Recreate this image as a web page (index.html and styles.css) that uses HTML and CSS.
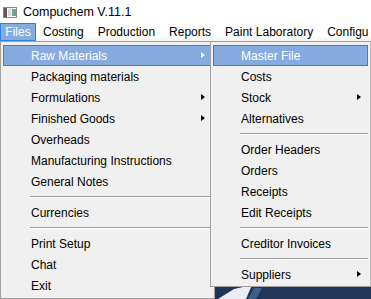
FILE: index.html
```html
<!DOCTYPE html>
<html lang="en">
<head>
    <meta charset="UTF-8">
    <title>Compuchem V.11.1</title>
    <link rel="stylesheet" href="styles.css">
</head>
<body>
    <div class="window">
        <div class="titlebar">
            <svg class="app-icon" width="14" height="11" viewBox="0 0 14 11">
                <rect x="0.5" y="0.5" width="13" height="10" fill="#fff" stroke="#8a8a8a"/>
                <rect x="1" y="1" width="3" height="9" fill="#5a5a5a"/>
                <rect x="9" y="2" width="4" height="7" fill="#6fa58a"/>
                <rect x="5" y="2" width="3" height="7" fill="#d8d8d8"/>
            </svg>
            <span class="title">Compuchem V.11.1</span>
        </div>

        <div class="menubar">
            <span class="top-item active">Files</span>
            <span class="top-item">Costing</span>
            <span class="top-item">Production</span>
            <span class="top-item">Reports</span>
            <span class="top-item">Paint Laboratory</span>
            <span class="top-item">Configu</span>
        </div>

        <div class="client">
            <svg class="backdrop" width="160" height="14" viewBox="0 0 160 14">
                <polygon points="6,14 22,4 40,0 34,14" fill="#e9eef4"/>
                <polygon points="36,14 42,3 50,3 44,14" fill="#3d5f8c"/>
            </svg>
        </div>

        <!-- Files dropdown -->
        <div class="menu main-menu">
            <div class="item selected">Raw Materials<i class="arrow"></i></div>
            <div class="item">Packaging materials</div>
            <div class="item">Formulations<i class="arrow"></i></div>
            <div class="item">Finished Goods<i class="arrow"></i></div>
            <div class="item">Overheads</div>
            <div class="item">Manufacturing Instructions</div>
            <div class="item">General Notes</div>
            <div class="sep"></div>
            <div class="item">Currencies</div>
            <div class="sep"></div>
            <div class="item">Print Setup</div>
            <div class="item">Chat</div>
            <div class="item">Exit</div>
        </div>

        <!-- Raw Materials submenu -->
        <div class="menu sub-menu">
            <div class="item selected">Master File</div>
            <div class="item">Costs</div>
            <div class="item">Stock<i class="arrow"></i></div>
            <div class="item">Alternatives</div>
            <div class="sep"></div>
            <div class="item">Order Headers</div>
            <div class="item">Orders</div>
            <div class="item">Receipts</div>
            <div class="item">Edit Receipts</div>
            <div class="sep"></div>
            <div class="item">Creditor Invoices</div>
            <div class="sep"></div>
            <div class="item">Suppliers<i class="arrow"></i></div>
        </div>
    </div>
</body>
</html>
```

FILE: styles.css
```css
:root {
    --menu-bg: #f0f0f0;
    --menu-border: #a0a0a0;
    --hl-fill: #86abe0;
    --hl-border: #2f84d6;
}

html, body {
    margin: 0;
    padding: 0;
    background: #fff;
}

body {
    font-family: 'Liberation Sans', Arial, sans-serif;
    font-size: 12px;
    color: #000;
    width: 371px;
    height: 299px;
    overflow: hidden;
}

.window {
    position: relative;
    width: 371px;
    height: 299px;
    display: flex;
    flex-direction: column;
}

.titlebar {
    height: 23px;
    display: flex;
    align-items: center;
    background: #fff;
    flex-shrink: 0;
}

.app-icon {
    margin: 1px 6px 0 3px;
}

.title {
    font-size: 12.5px;
    color: #000;
}

.menubar {
    height: 18px;
    display: flex;
    align-items: stretch;
    background: linear-gradient(#fff, #fff 70%, #f3f3f3);
    flex-shrink: 0;
    white-space: nowrap;
    overflow: hidden;
}

.top-item {
    padding: 0 6px;
    display: flex;
    align-items: center;
    border: 1px solid transparent;
}

.top-item.active {
    width: 36px;
    box-sizing: border-box;
    justify-content: center;
    background: var(--hl-fill);
    border-color: var(--hl-border);
    color: #fff;
}

.top-item.active + .top-item {
    padding-left: 6px;
}

.client {
    flex: 1;
    background: #1f3658;
    position: relative;
}

.backdrop {
    position: absolute;
    left: 212px;
    bottom: 0;
}

/* popup menus */
.menu {
    position: absolute;
    top: 41px;
    background: var(--menu-bg);
    border: 1px solid var(--menu-border);
    padding: 3px 2px 1px;
    box-sizing: border-box;
}

.main-menu {
    left: 0;
    width: 215px;
    height: 258px;
}

.sub-menu {
    left: 210px;
    width: 161px;
    height: 246px;
    border-right-color: #bdbdbd;
}

.item {
    position: relative;
    height: 21px;
    padding-left: 27px;
    box-sizing: border-box;
    white-space: nowrap;
    border: 1px solid transparent;
    line-height: 20px;
}

.item.selected {
    background: var(--hl-fill);
    border-color: var(--hl-border);
    color: #fff;
}

.arrow {
    position: absolute;
    right: 6px;
    top: 6px;
    width: 0;
    height: 0;
    border-top: 3.5px solid transparent;
    border-bottom: 3.5px solid transparent;
    border-left: 4px solid #000;
}

.selected .arrow {
    border-left-color: #fff;
}

.sep {
    height: 10px;
    margin-left: 27px;
    box-sizing: border-box;
    padding-top: 4px;
}

.sep::before {
    content: '';
    display: block;
    border-top: 1px solid var(--menu-border);
    border-bottom: 1px solid #fff;
}
```
